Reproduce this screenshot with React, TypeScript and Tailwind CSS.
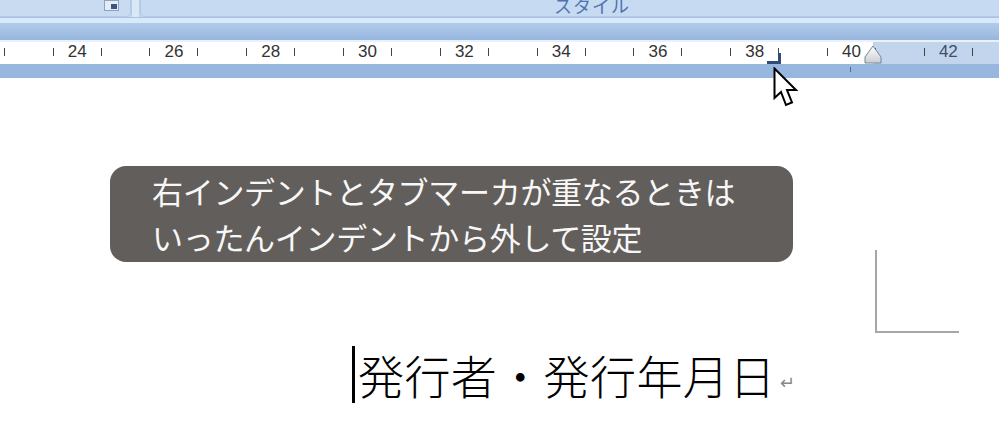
import React from 'react'

// each ruler segment is two character units wide, number in the middle
const SEG = 96.8
const numbers = [22, 24, 26, 28, 30, 32, 34, 36, 38, 40, 42, 44]

function Tick() {
  return <div className="h-[8px] w-px bg-[#444]" />
}

function Ruler() {
  return (
    <div className="relative h-[24px] bg-[#c3d5ed] overflow-hidden">
      <div className="absolute left-0 top-0 h-full w-[873px] bg-white" />
      <div className="absolute left-0 top-0 h-[2px] w-full bg-[#e9f1fb]" />
      <div className="relative flex h-full -ml-[68px]">
        {numbers.map(n => (
          <div key={n} className="flex shrink-0 items-center justify-center" style={{ width: SEG }}>
            <div className="flex w-[49px] items-center justify-between">
              <Tick />
              <span
                className={`text-[17px] leading-[18px] ${n > 40 ? 'text-[#3e4f6a]' : 'text-[#333]'}`}
                style={{ fontFamily: '"Liberation Sans", Arial, sans-serif' }}
              >
                {n === 22 || n === 44 ? '' : n}
              </span>
              <Tick />
            </div>
          </div>
        ))}
      </div>
      {/* right tab marker */}
      <div className="absolute left-[778px] top-[13px] h-[11px] w-[3px] bg-[#2f4c7c]" />
      <div className="absolute left-[767px] top-[21px] h-[3px] w-[14px] bg-[#2f4c7c]" />
      {/* right indent marker */}
      <svg className="absolute left-[863px] top-[4px]" width="20" height="20" viewBox="0 0 20 20">
        <defs>
          <linearGradient id="ind" x1="0" y1="0" x2="0" y2="1">
            <stop offset="0" stopColor="#ffffff" />
            <stop offset="1" stopColor="#c9cdd3" />
          </linearGradient>
        </defs>
        <path d="M10 2 L18 13 L18 19 L2 19 L2 13 Z" fill="url(#ind)" stroke="#7a8494" strokeWidth="1" />
      </svg>
    </div>
  )
}

export default function App() {
  return (
    <div className="relative flex flex-col w-[999px] h-[423px] overflow-hidden bg-white" style={{ fontFamily: '"Noto Sans CJK JP", sans-serif' }}>
      {/* ribbon bottom */}
      <div className="flex h-[18px] bg-[#c5d9f0] border-b border-[#a9c2e2]">
        <div className="flex w-[131px] justify-end pr-[11px] rounded-br-[5px] border-r border-b border-[#b2c8e4] bg-[#c8dbf1]">
          <div className="flex h-[11px] w-[15px] items-end justify-end border border-[#8aa3c4] bg-[#e4edf7] p-px">
            <div className="h-[5px] w-[6px] bg-[#3a5580]" />
          </div>
        </div>
        <div className="w-[9px] bg-[#d9e8f7] border-x border-[#b7cce6]" />
        <div className="flex-1 rounded-bl-[5px] border-l border-b border-[#b2c8e4] bg-[#c6daf1] overflow-hidden">
          <div className="-mt-[6px] ml-[413px] text-[18px] leading-[22px] text-[#4f72b0] tracking-[1px]">スタイル</div>
        </div>
      </div>
      <div className="h-[5px] bg-[#d8eaf9]" />
      <div className="h-[17px] bg-gradient-to-b from-[#b3cbea] to-[#97b6de]" />
      <Ruler />
      <div className="relative h-[14px] bg-[#98b7de]">
        <div className="absolute left-[850px] top-[3px] h-[5px] w-px bg-[#4d6a96]" />
      </div>

      {/* callout */}
      <div className="ml-[110px] mt-[88px] w-[683px] h-[96px] rounded-[16px] bg-[#625e5b] pl-[42px] pt-[2px] text-[31px] leading-[46px] text-[#f7f7f7] tracking-[-0.3px]">
        <div>右インデントとタブマーカが重なるときは</div>
        <div>いったんインデントから外して設定</div>
      </div>

      {/* document line */}
      <div className="mt-[84px] ml-[352px] flex items-center">
        <div className="h-[57px] w-[3px] bg-black" />
        <div className="ml-[3px] text-[46px] leading-[57px] font-extralight text-black tracking-[0.4px]">発行者・発行年月日</div>
        <div className="ml-[4px] mt-[12px] text-[18px] leading-[18px] text-[#888]">↵</div>
      </div>

      {/* margin crop mark */}
      <div className="absolute left-[875px] top-[250px] h-[83px] w-[84px] border-l-2 border-b-2 border-[#a6a6a6]" />

      {/* mouse pointer */}
      <svg className="absolute left-[773px] top-[67px]" width="30" height="44" viewBox="0 0 30 44">
        <path d="M1.5 1.5 L1.5 31 L8 25 L13 38 L19 35.5 L14 23 L23 23 Z" fill="white" stroke="black" strokeWidth="2" strokeLinejoin="miter" />
      </svg>
    </div>
  )
}
